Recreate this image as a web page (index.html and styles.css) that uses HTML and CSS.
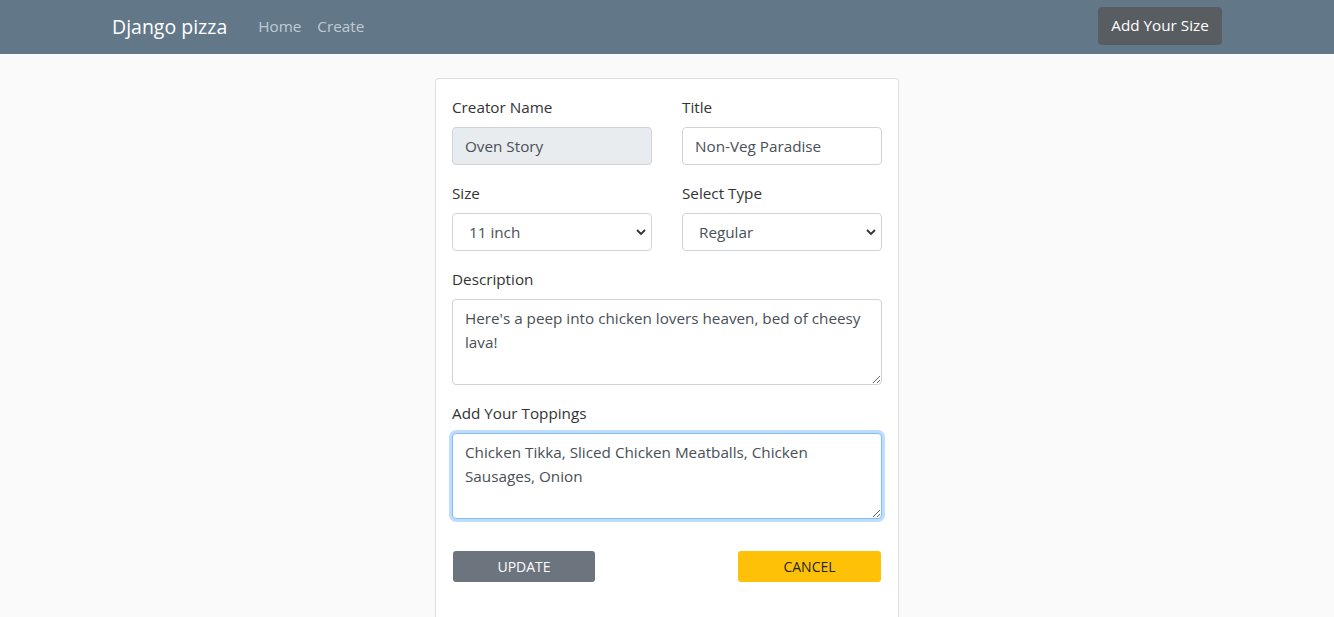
FILE: index.html
```html
<!DOCTYPE html>
<html lang="en">
<head>
<meta charset="utf-8">
<title>Django pizza</title>
<link rel="stylesheet" href="styles.css">
</head>
<body>
<nav class="navbar">
  <div class="container nav-inner">
    <div class="nav-left">
      <a class="brand" href="#">Django pizza</a>
      <a class="nav-link" href="#">Home</a>
      <a class="nav-link" href="#">Create</a>
    </div>
    <a class="btn btn-nav" href="#">Add Your Size</a>
  </div>
</nav>
<main class="main">
  <div class="card">
    <form class="form">
      <div class="row">
        <div class="group">
          <label class="label">Creator Name</label>
          <input class="control control-readonly" type="text" value="Oven Story" readonly>
        </div>
        <div class="group">
          <label class="label">Title</label>
          <input class="control" type="text" value="Non-Veg Paradise">
        </div>
      </div>
      <div class="row">
        <div class="group">
          <label class="label">Size</label>
          <select class="control select"><option>11 inch</option></select>
        </div>
        <div class="group">
          <label class="label">Select Type</label>
          <select class="control select"><option>Regular</option></select>
        </div>
      </div>
      <div class="group">
        <label class="label">Description</label>
        <textarea class="control area" rows="3">Here's a peep into chicken lovers heaven, bed of cheesy lava!</textarea>
      </div>
      <div class="group">
        <label class="label">Add Your Toppings</label>
        <textarea class="control area area-focus" rows="3">Chicken Tikka, Sliced Chicken Meatballs, Chicken Sausages, Onion</textarea>
      </div>
      <div class="actions">
        <button class="btn-sm btn-update" type="button">UPDATE</button>
        <button class="btn-sm btn-cancel" type="button">CANCEL</button>
      </div>
    </form>
  </div>
</main>
</body>
</html>
```

FILE: styles.css
```css
* { box-sizing: border-box; }
html, body { margin: 0; padding: 0; }
body {
  background: #fafafa;
  font-family: "Open Sans", "Noto Sans", sans-serif;
  font-size: 15.25px;
  line-height: 24px;
  color: #212529;
  height: 617px;
  overflow: hidden;
}
.container {
  max-width: 1140px;
  margin: 0 auto;
  padding: 0 15px;
}
.navbar {
  background: #627889;
  padding: 8px 0;
  height: 54px;
}
.nav-inner {
  display: flex;
  align-items: center;
  justify-content: space-between;
}
.nav-left { display: flex; align-items: center; }
.brand {
  color: #fff;
  font-size: 19.5px;
  text-decoration: none;
  margin-right: 23px;
  line-height: 30px;
}
.nav-link {
  color: rgba(255,255,255,0.62);
  text-decoration: none;
  padding: 0 8px;
  font-size: 15.25px;
  margin-top: -1px;
}
.nav-link:first-of-type { padding-left: 0; }
.btn-nav {
  display: inline-block;
  background: #585d62;
  color: #fff;
  text-decoration: none;
  border-radius: 4px;
  height: 38px;
  width: 124px;
  line-height: 37px;
  text-align: center;
  font-size: 15.25px;
  margin-top: -1px;
}
.main {
  display: flex;
  justify-content: center;
  padding-top: 24px;
}
.card {
  width: 464px;
  background: #fff;
  border: 1px solid #dedfe0;
  border-bottom: none;
  border-radius: 4px 4px 0 0;
  padding: 16px 16px 0;
  height: 539px;
}
.row {
  display: grid;
  grid-template-columns: 200px 200px;
  column-gap: 30px;
}
.group { margin-bottom: 16px; }
.label {
  display: block;
  margin-bottom: 8px;
  line-height: 24px;
  color: #333;
}
.control {
  display: block;
  width: 100%;
  height: 38px;
  padding: 6px 12px;
  font-family: inherit;
  font-size: 15.25px;
  line-height: 24px;
  color: #495057;
  background: #fff;
  border: 1px solid #ced4da;
  border-radius: 4px;
  outline: none;
  margin: 0;
}
.control-readonly { background: #e9ecef; }
.select {
  appearance: none;
  -webkit-appearance: none;
  padding-left: 16px;
  background-image: url("data:image/svg+xml,%3Csvg xmlns='http://www.w3.org/2000/svg' width='10' height='6' viewBox='0 0 10 6'%3E%3Cpath d='M1 1l4 4 4-4' fill='none' stroke='%23333' stroke-width='1.8'/%3E%3C/svg%3E");
  background-repeat: no-repeat;
  background-position: right 5px center;
  background-size: 10px 6px;
}
.area {
  height: 86px;
  resize: vertical;
}
.area-focus {
  border-color: #80bdff;
  box-shadow: 0 0 0 3px rgba(0,123,255,0.25);
}
.actions {
  display: flex;
  justify-content: space-between;
  padding: 16px 1px 0;
}
.btn-sm {
  height: 31px;
  border: none;
  border-radius: 3px;
  font-family: inherit;
  font-size: 14px;
  cursor: pointer;
  padding: 0;
}
.btn-update {
  width: 142px;
  background: #6c757d;
  color: #fff;
}
.btn-cancel {
  width: 143px;
  background: #ffc107;
  color: #212529;
}
```
